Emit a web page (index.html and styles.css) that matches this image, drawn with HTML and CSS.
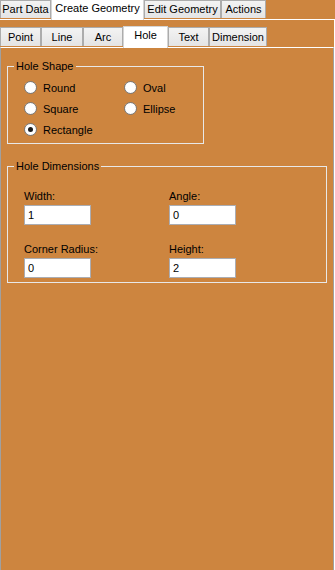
FILE: index.html
```html
<!DOCTYPE html>
<html lang="en">
<head>
  <meta charset="UTF-8" />
  <title>Create Geometry</title>
  <link rel="stylesheet" href="styles.css">
</head>
<body>
  <div class="tabstrip top">
    <div class="tab w-part">Part Data</div>
    <div class="tab active w-create">Create Geometry</div>
    <div class="tab w-edit">Edit Geometry</div>
    <div class="tab w-actions">Actions</div>
  </div>

  <div class="page outer">
    <div class="tabstrip sub">
      <div class="tab w-point">Point</div>
      <div class="tab w-line">Line</div>
      <div class="tab w-arc">Arc</div>
      <div class="tab active w-hole">Hole</div>
      <div class="tab w-text">Text</div>
      <div class="tab w-dim">Dimension</div>
    </div>

    <div class="page inner">
      <!-- Hole shape options -->
      <fieldset class="group shape">
        <legend>Hole Shape</legend>
        <div class="options">
          <div class="option"><span class="radio"></span>Round</div>
          <div class="option"><span class="radio"></span>Oval</div>
          <div class="option"><span class="radio"></span>Square</div>
          <div class="option"><span class="radio"></span>Ellipse</div>
          <div class="option"><span class="radio checked"></span>Rectangle</div>
        </div>
      </fieldset>

      <!-- Hole dimensions -->
      <fieldset class="group dims">
        <legend>Hole Dimensions</legend>
        <div class="fields">
          <div class="field">
            <label>Width:</label>
            <input type="text" value="1" readonly>
          </div>
          <div class="field">
            <label>Angle:</label>
            <input type="text" value="0" readonly>
          </div>
          <div class="field">
            <label>Corner Radius:</label>
            <input type="text" value="0" readonly>
          </div>
          <div class="field">
            <label>Height:</label>
            <input type="text" value="2" readonly>
          </div>
        </div>
      </fieldset>
    </div>
  </div>
</body>
</html>
```

FILE: styles.css
```css
body {
  margin: 0;
  background: #cd853f;
  font-family: "Liberation Sans", Arial, sans-serif;
  font-size: 11px;
  color: #000;
  width: 335px;
  height: 570px;
  overflow: hidden;
}

/* tab strips */
.tabstrip {
  display: flex;
  align-items: flex-start;
}

.tabstrip.top {
  height: 19px;
}

.tabstrip.sub {
  height: 20px;
}

.tab {
  box-sizing: border-box;
  border: 1px solid #acacac;
  border-bottom: none;
  background: linear-gradient(#f3f3f3, #e4e4e4);
  text-align: center;
  white-space: nowrap;
}

.top .tab {
  height: 18px;
  line-height: 17px;
}

.sub .tab {
  height: 19px;
  line-height: 18px;
}

.tab.active {
  position: relative;
  z-index: 1;
  background: #fff;
  border-color: #d4d4d4;
}

.top .tab.active {
  height: 20px;
  line-height: 16px;
  border-top: none;
}

.sub .tab.active {
  margin-top: -1px;
  height: 22px;
  line-height: 16px;
}

.w-part { width: 51px; }
.w-create { width: 93px; }
.w-edit { width: 77px; }
.w-actions { width: 45px; }

.w-point { width: 41px; }
.w-line { width: 42px; }
.w-arc { width: 40px; }
.w-hole { width: 45px; }
.w-text { width: 41px; }
.w-dim { width: 58px; }

/* pages */
.page.outer {
  border-top: 1px solid #fff;
  border-right: 1px solid #fff;
  padding-top: 7px;
}

.page.inner {
  border-top: 1px solid #fff;
  border-left: 1px solid #a0a0a0;
  border-right: 1px solid #a0a0a0;
  min-height: 530px;
  padding-top: 12px;
}

/* group boxes */
.group {
  box-sizing: border-box;
  margin: 0 0 0 6px;
  padding: 0;
  border: 1px solid #e8e8e8;
  min-width: 0;
}

.group legend {
  margin-left: 6px;
  padding: 0 2px;
  line-height: 13px;
}

.group.shape {
  width: 197px;
}

.group.dims {
  width: 320px;
  margin-top: 16px;
}

.options {
  display: grid;
  grid-template-columns: 100px 1fr;
  grid-auto-rows: 21px;
  padding: 4px 0 3px 16px;
}

.option {
  display: flex;
  align-items: center;
  gap: 6px;
}

.radio {
  box-sizing: border-box;
  width: 13px;
  height: 13px;
  border: 1px solid #7a7a7a;
  border-radius: 50%;
  background: radial-gradient(#fff 55%, #e6e6e6);
  display: flex;
  justify-content: center;
  align-items: center;
}

.radio.checked::after {
  content: "";
  width: 5px;
  height: 5px;
  border-radius: 50%;
  background: #1c1c1c;
}

.fields {
  display: grid;
  grid-template-columns: 145px 1fr;
  row-gap: 18px;
  padding: 17px 0 4px 16px;
}

.field label {
  display: block;
  line-height: 13px;
  margin-bottom: 2px;
}

.field input {
  box-sizing: border-box;
  display: block;
  width: 67px;
  height: 20px;
  margin: 0;
  padding: 0 3px;
  border: 1px solid #abadb3;
  background: #fff;
  font: inherit;
  color: #000;
  outline: none;
}
```
